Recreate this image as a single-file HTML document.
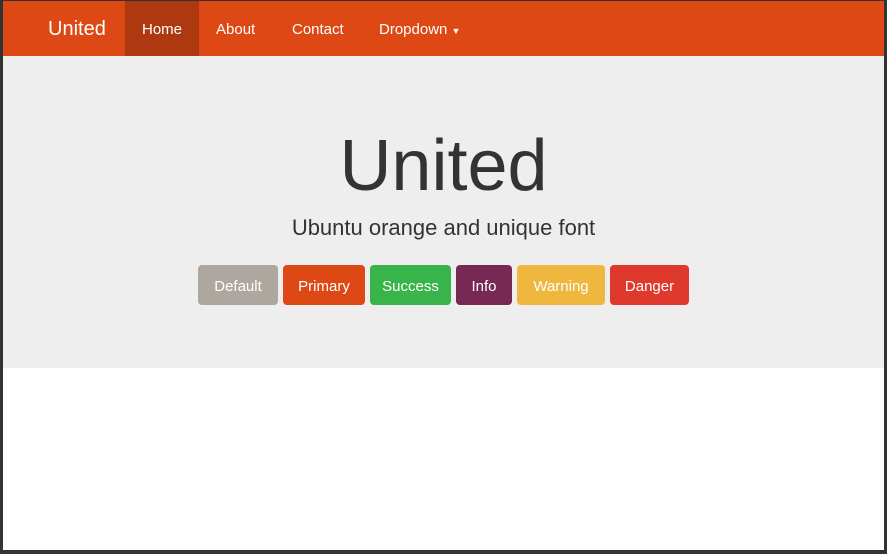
<!DOCTYPE html>
<html><head><style>
*{margin:0;padding:0;box-sizing:border-box}
body{width:887px;height:554px;background:#333;position:relative;overflow:hidden;font-family:"Liberation Sans",sans-serif}
.page{position:absolute;left:3px;top:1px;width:881px;height:549px;background:#fff}
.nav{height:55px;background:#dd4814;position:relative;color:#fff}
.nav span{position:absolute;top:0;line-height:57px;font-size:15px}
.home{left:122px;width:74px;height:55px;background:#ae3910;text-align:center}
.jumbo{position:absolute;top:55px;left:0;width:881px;height:312px;background:#eee;text-align:center;color:#333}
h1{font-weight:normal;font-size:72px;position:absolute;top:70px;width:100%;line-height:80px}
p{font-size:22px;position:absolute;top:159px;width:100%}
.b{position:absolute;top:209px;height:40px;line-height:44px;border-radius:4px;color:#fff;font-size:15px;text-align:center}
</style></head><body><div class="page">
<div class="nav">
<span style="left:45px;font-size:20px">United</span>
<span class="home">Home</span>
<span style="left:213px">About</span>
<span style="left:289px">Contact</span>
<span style="left:376px">Dropdown <span style="position:static;font-size:9px">▼</span></span>
</div>
<div class="jumbo">
<h1>United</h1>
<p>Ubuntu orange and unique font</p>
<div class="b" style="left:195px;width:80px;background:#aea79f">Default</div>
<div class="b" style="left:280px;width:82px;background:#dd4814">Primary</div>
<div class="b" style="left:367px;width:81px;background:#38b44a">Success</div>
<div class="b" style="left:453px;width:56px;background:#772953">Info</div>
<div class="b" style="left:514px;width:88px;background:#efb73e">Warning</div>
<div class="b" style="left:607px;width:79px;background:#df382c">Danger</div>
</div>
</div></body></html>
